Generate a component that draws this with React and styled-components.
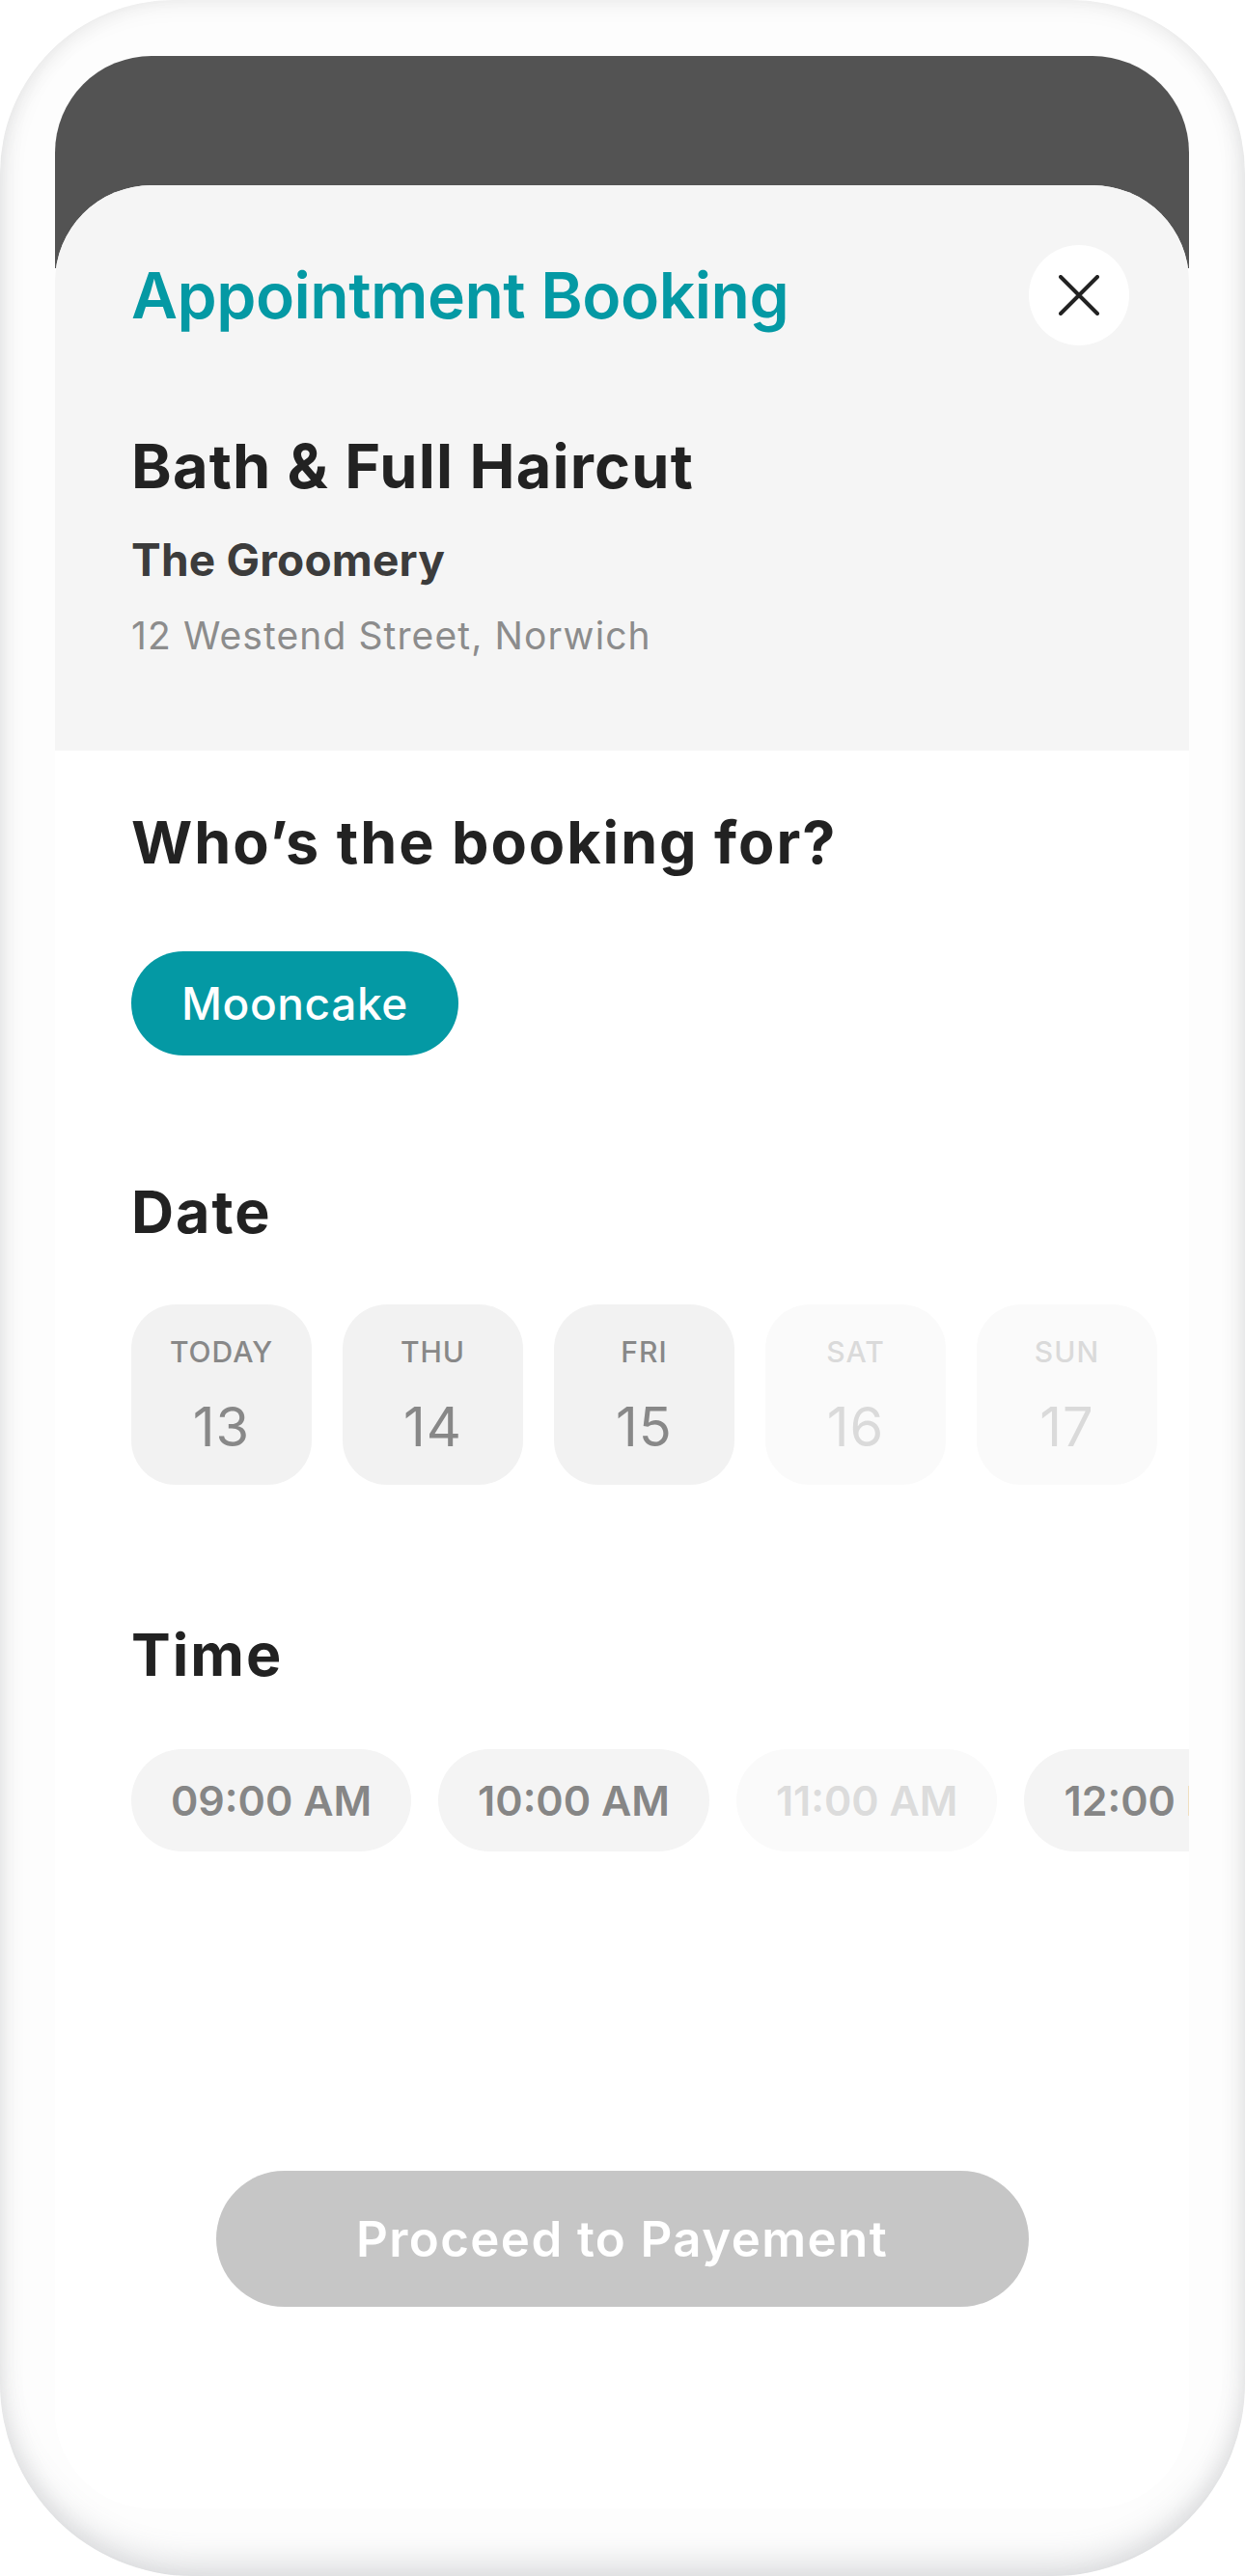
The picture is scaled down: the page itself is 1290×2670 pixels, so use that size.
import styled, { createGlobalStyle } from 'styled-components';

const GlobalStyle = createGlobalStyle`
  * {
    box-sizing: border-box;
  }
  html, body {
    margin: 0;
    padding: 0;
    background: #ffffff;
  }
  body {
    font-family: Inter, "Noto Sans", sans-serif;
    -webkit-font-smoothing: antialiased;
  }
`;

const Frame = styled.div`
  width: 1290px;
  height: 2670px;
  padding: 58px 58px 70px 57px;
  border-radius: 180px 180px 200px 200px;
  background: #fdfdfd;
  box-shadow:
    inset 0 -24px 30px -8px rgba(110, 115, 125, 0.2),
    inset 16px 0 24px -10px rgba(0, 0, 0, 0.06),
    inset -16px 0 24px -10px rgba(0, 0, 0, 0.06),
    inset 0 16px 24px -10px rgba(0, 0, 0, 0.05);
`;

const Screen = styled.div`
  height: 100%;
  border-radius: 100px;
  overflow: hidden;
  display: flex;
  flex-direction: column;
  padding-top: 134px;
  background: linear-gradient(#535353 0 220px, #ffffff 220px);
`;

const Sheet = styled.div`
  flex: 1;
  display: flex;
  flex-direction: column;
  background: #ffffff;
  border-radius: 100px 100px 0 0;
  overflow: hidden;
`;

const Header = styled.header`
  background: #f5f5f5;
  padding: 62px 62px 100px 79px;
`;

const TitleRow = styled.div`
  display: flex;
  align-items: center;
  justify-content: space-between;
`;

const Title = styled.h1`
  margin: 0;
  font-size: 66px;
  line-height: 1;
  font-weight: 600;
  letter-spacing: -0.5px;
  color: #0499a4;
`;

const CloseButton = styled.button`
  width: 104px;
  height: 104px;
  border: none;
  border-radius: 50%;
  background: #ffffff;
  display: flex;
  align-items: center;
  justify-content: center;
  padding: 0;
`;

const ServiceName = styled.h2`
  margin: 94px 0 0;
  font-size: 63px;
  line-height: 1;
  font-weight: 700;
  letter-spacing: 1.2px;
  color: #222222;
`;

const Venue = styled.div`
  margin-top: 42px;
  font-size: 46px;
  line-height: 1;
  font-weight: 700;
  letter-spacing: 0.2px;
  color: #3c3c3c;
`;

const Address = styled.div`
  margin-top: 36px;
  font-size: 39px;
  line-height: 1;
  font-weight: 400;
  letter-spacing: 1.1px;
  color: #8c8c8c;
`;

const Body = styled.main`
  flex: 1;
  display: flex;
  flex-direction: column;
  align-items: flex-start;
  padding: 65px 62px 209px 79px;
`;

const SectionTitle = styled.h3`
  margin: ${({ $gap }) => $gap}px 0 0;
  font-size: 61px;
  line-height: 1;
  font-weight: 700;
  letter-spacing: 2px;
  color: #222222;
`;

const PetPill = styled.button`
  margin-top: 82px;
  height: 108px;
  padding: 0 52px;
  border: none;
  border-radius: 54px;
  background: #0499a4;
  color: #ffffff;
  font-family: inherit;
  font-size: 46px;
  font-weight: 500;
  letter-spacing: 0.6px;
`;

const DateRow = styled.div`
  margin-top: 65px;
  display: flex;
  gap: 32px;
`;

const DateCard = styled.div`
  width: 187px;
  height: 187px;
  flex-shrink: 0;
  border-radius: 46px;
  background: ${({ $disabled }) => ($disabled ? '#fafafa' : '#f2f2f2')};
  color: ${({ $disabled }) => ($disabled ? '#dadada' : '#888888')};
  display: flex;
  flex-direction: column;
  align-items: center;
  padding-top: 34px;
  gap: 35px;
`;

const DayLabel = styled.span`
  font-size: 30px;
  line-height: 1;
  font-weight: 500;
  letter-spacing: 1px;
`;

const DayNumber = styled.span`
  font-size: 56px;
  line-height: 1;
  font-weight: 400;
  letter-spacing: 1px;
`;

const TimeRow = styled.div`
  margin-top: 67px;
  align-self: stretch;
  margin-right: -62px;
  display: flex;
  gap: 28px;
  overflow: hidden;
`;

const TimePill = styled.div`
  height: 106px;
  flex-shrink: 0;
  padding: 0 41px;
  border-radius: 53px;
  background: ${({ $disabled }) => ($disabled ? '#fafafa' : '#f4f4f4')};
  color: ${({ $disabled }) => ($disabled ? '#dcdcdc' : '#868686')};
  display: flex;
  align-items: center;
  font-size: 43px;
  font-weight: 600;
  letter-spacing: 0;
  white-space: nowrap;
`;

const Footer = styled.div`
  margin: auto -62px 0 -79px;
  align-self: stretch;
  display: flex;
  justify-content: center;
`;

const ProceedButton = styled.button`
  width: 842px;
  height: 141px;
  border: none;
  border-radius: 71px;
  background: #c6c6c6;
  color: #ffffff;
  font-family: inherit;
  font-size: 51px;
  font-weight: 600;
  letter-spacing: 1.4px;
`;

const days = [
  { label: 'TODAY', num: 13 },
  { label: 'THU', num: 14 },
  { label: 'FRI', num: 15 },
  { label: 'SAT', num: 16, disabled: true },
  { label: 'SUN', num: 17, disabled: true },
];

const times = [
  { label: '09:00 AM' },
  { label: '10:00 AM' },
  { label: '11:00 AM', disabled: true },
  { label: '12:00 PM' },
];

const CloseIcon = () => (
  <svg width="42" height="42" viewBox="0 0 42 42">
    <path d="M2 2 L40 40 M40 2 L2 40" stroke="#222" strokeWidth="4" strokeLinecap="round" fill="none" />
  </svg>
);

export default function App() {
  return (
    <>
      <GlobalStyle />
      <Frame>
        <Screen>
          <Sheet>
            <Header>
              <TitleRow>
                <Title>Appointment Booking</Title>
                <CloseButton aria-label="Close">
                  <CloseIcon />
                </CloseButton>
              </TitleRow>
              <ServiceName>Bath &amp; Full Haircut</ServiceName>
              <Venue>The Groomery</Venue>
              <Address>12 Westend Street, Norwich</Address>
            </Header>

            <Body>
              <SectionTitle $gap={0}>Who’s the booking for?</SectionTitle>
              <PetPill>Mooncake</PetPill>

              <SectionTitle $gap={132}>Date</SectionTitle>
              <DateRow>
                {days.map((d) => (
                  <DateCard key={d.num} $disabled={d.disabled}>
                    <DayLabel>{d.label}</DayLabel>
                    <DayNumber>{d.num}</DayNumber>
                  </DateCard>
                ))}
              </DateRow>

              <SectionTitle $gap={146}>Time</SectionTitle>
              <TimeRow>
                {times.map((t) => (
                  <TimePill key={t.label} $disabled={t.disabled}>
                    {t.label}
                  </TimePill>
                ))}
              </TimeRow>

              <Footer>
                <ProceedButton>Proceed to Payement</ProceedButton>
              </Footer>
            </Body>
          </Sheet>
        </Screen>
      </Frame>
    </>
  );
}
